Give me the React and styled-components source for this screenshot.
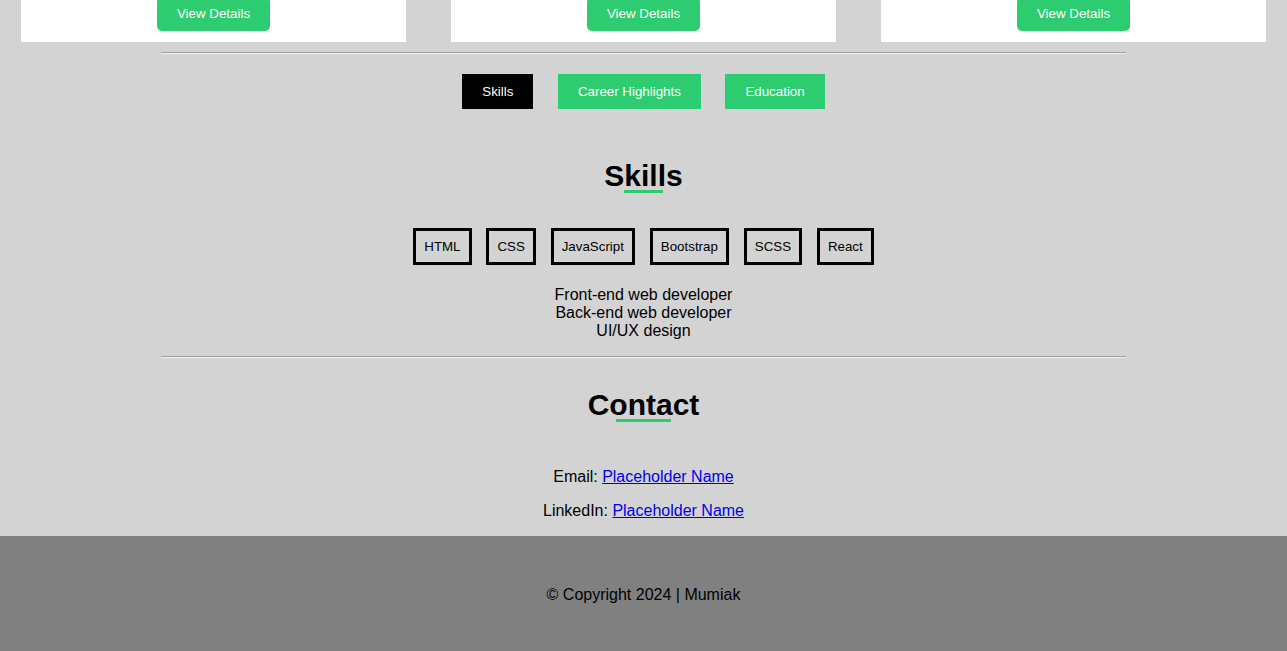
import React, { useState } from 'react';
import styled, { createGlobalStyle } from 'styled-components';

const GlobalStyle = createGlobalStyle`
  html {
    overflow: hidden;
  }
  body {
    margin: 0;
    background: #d3d3d3;
    font-family: "Liberation Sans", Arial, sans-serif;
    color: #000;
  }
`;

/**
 *  Projects (scrolled past, only the card bottoms show)
 */
const CardGrid = styled.div`
  display: grid;
  grid-template-columns: repeat(3, 1fr);
  gap: 45px;
  padding: 0 21px;
`;

const Card = styled.div`
  background: #fff;
  display: flex;
  justify-content: center;
  padding-bottom: 11px;
  overflow: hidden;
`;

const DetailsButton = styled.button`
  margin-top: -3px;
  background: #2ecc71;
  color: #fff;
  border: none;
  border-radius: 5px;
  padding: 9px 20px;
  font-family: inherit;
  font-size: 13.333px;
  line-height: 16px;
  cursor: pointer;
`;

const Divider = styled.hr`
  width: 75%;
  margin: ${(p) => p.$top}px auto ${(p) => p.$bottom}px;
  border: none;
  border-top: 1px solid #a0a0a0;
  border-bottom: 1px solid #eeeeee;
`;

/**
 *  Tabs
 */
const TabBar = styled.div`
  display: flex;
  justify-content: center;
  gap: 24.5px;
`;

const Tab = styled.button`
  background: ${(p) => (p.$active ? '#000' : '#2ecc71')};
  color: #fff;
  border: none;
  padding: 10px 20px;
  font-family: inherit;
  font-size: 13.333px;
  line-height: 15px;
  cursor: pointer;
`;

/**
 *  Sections
 */
const Section = styled.section`
  display: flex;
  flex-direction: column;
  align-items: center;
  padding-top: ${(p) => p.$top}px;
`;

const Heading = styled.h2`
  position: relative;
  display: inline-block;
  margin: 0;
  font-size: 30px;
  line-height: 34px;
  font-weight: 700;

  &::after {
    content: '';
    position: absolute;
    left: 25%;
    bottom: 0;
    width: 50%;
    height: 3px;
    background: #2ecc71;
  }
`;

const SkillList = styled.div`
  display: flex;
  justify-content: center;
  gap: 14.5px;
  margin-top: 35px;
`;

const SkillTag = styled.span`
  border: 3px solid #000;
  padding: 8px 8.2px;
  font-size: 13.333px;
  line-height: 15px;
`;

const RoleList = styled.div`
  margin-top: 21px;
  text-align: center;
  font-size: 16px;
  line-height: 18px;
`;

const ContactLine = styled.p`
  margin: ${(p) => p.$top}px 0 0;
  font-size: 16px;
  line-height: 18px;
  text-align: center;

  a {
    color: #0000ee;
  }
`;

const Footer = styled.footer`
  margin-top: 16px;
  background: #808080;
  padding: 50px 0 47px;
  text-align: center;
  font-size: 16px;
  line-height: 18px;
`;

const tabs = ['Skills', 'Career Highlights', 'Education'];
const skills = ['HTML', 'CSS', 'JavaScript', 'Bootstrap', 'SCSS', 'React'];

export default function App() {
  const [tab, setTab] = useState('Skills');

  return (
    <>
      <GlobalStyle />
      <CardGrid>
        {[1, 2, 3].map((n) => (
          <Card key={n}>
            <DetailsButton>View Details</DetailsButton>
          </Card>
        ))}
      </CardGrid>

      <Divider $top={10} $bottom={20} />

      <TabBar>
        {tabs.map((t) => (
          <Tab key={t} $active={tab === t} onClick={() => setTab(t)}>
            {t}
          </Tab>
        ))}
      </TabBar>

      <Section $top={50}>
        <Heading>Skills</Heading>
        <SkillList>
          {skills.map((s) => (
            <SkillTag key={s}>{s}</SkillTag>
          ))}
        </SkillList>
        <RoleList>
          Front-end web developer
          <br />
          Back-end web developer
          <br />
          UI/UX design
        </RoleList>
      </Section>

      <Divider $top={16} $bottom={0} />

      <Section $top={30}>
        <Heading>Contact</Heading>
        <ContactLine $top={46}>
          Email: <a href="#">Placeholder Name</a>
        </ContactLine>
        <ContactLine $top={16}>
          LinkedIn: <a href="#">Placeholder Name</a>
        </ContactLine>
      </Section>

      <Footer>© Copyright 2024 | Mumiak</Footer>
    </>
  );
}
